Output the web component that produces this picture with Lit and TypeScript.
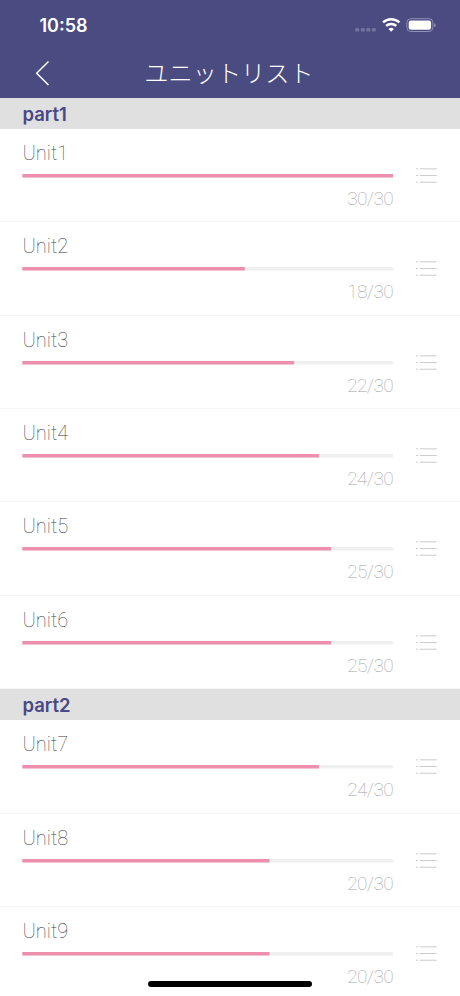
import { LitElement, html, css } from "lit";
import { customElement, property } from "lit/decorators.js";

const TOTAL = 30;
const TRACK = 371;

interface Section {
  title: string;
  units: { name: string; done: number }[];
}

const SECTIONS: Section[] = [
  {
    title: "part1",
    units: [
      { name: "Unit1", done: 30 },
      { name: "Unit2", done: 18 },
      { name: "Unit3", done: 22 },
      { name: "Unit4", done: 24 },
      { name: "Unit5", done: 25 },
      { name: "Unit6", done: 25 },
    ],
  },
  {
    title: "part2",
    units: [
      { name: "Unit7", done: 24 },
      { name: "Unit8", done: 20 },
      { name: "Unit9", done: 20 },
    ],
  },
];

@customElement("unit-row")
export class UnitRow extends LitElement {
  @property() name = "";
  @property({ type: Number }) done = 0;

  static styles = css`
    :host {
      display: flex;
      flex: none;
      box-sizing: border-box;
      height: 93.36px;
      padding: 0 22px;
      border-bottom: 1px solid #f6f6f6;
      font-family: Roboto, "Liberation Sans", sans-serif;
      font-weight: 200;
    }
    .main {
      flex: none;
      width: 371px;
      padding-top: 12px;
    }
    .name {
      height: 33px;
      padding-left: 0.5px;
      line-height: 24px;
      font-size: 20px;
      font-weight: 150;
      color: #3c3c3c;
    }
    .track {
      display: block;
    }
    .count {
      margin-top: 9px;
      line-height: 24px;
      text-align: right;
      font-size: 19px;
      font-weight: 150;
      letter-spacing: -0.6px;
      color: #a4a4a4;
    }
    .menu {
      display: block;
      margin: 38px 0 0 22px;
    }
  `;

  render() {
    return html`
      <div class="main">
        <div class="name">${this.name}</div>
        <svg class="track" width=${TRACK} height="4" viewBox="0 0 371 4">
          <rect x="0.3" width="370.7" height="3.5" fill="#efefef" />
          <rect x="0.3" width=${(this.done / TOTAL) * 370.7} height="3.5" fill="#ee8fae" />
        </svg>
        <div class="count">${this.done}/${TOTAL}</div>
      </div>
      <svg class="menu" width="24" height="18" viewBox="0 0 24 18" fill="none" stroke="#c9c9c9">
        <path d="M1 1.5h2M5 1.5h17.500M1 8.5h2M5 8.5h17.500M1 15.5h2M5 15.5h17.500" />
      </svg>
    `;
  }
}

@customElement("app-root")
export class AppRoot extends LitElement {
  static styles = css`
    :host {
      display: flex;
      flex-direction: column;
      position: relative;
      width: 460px;
      height: 996px;
      overflow: hidden;
      background: #fff;
    }
    .top {
      flex: none;
      height: 98px;
      background: #4a4b80;
      color: #fff;
    }
    .status {
      display: flex;
      align-items: center;
      height: 50px;
      padding: 0 24px 0 39.5px;
    }
    .time {
      flex: 1;
      padding-top: 1px;
      font: 600 18px/24px Inter, "Liberation Sans", sans-serif;
    }
    .nav {
      display: grid;
      grid-template-columns: 50px 1fr 50px;
      align-items: center;
      height: 46px;
      padding: 0 2px 2px 0;
    }
    .back {
      justify-self: end;
    }
    .title {
      padding-bottom: 2px;
      text-align: center;
      font: 300 24.2px/32px "Noto Sans CJK JP", sans-serif;
    }
    .section {
      flex: none;
      height: 31px;
      padding-left: 22.5px;
      background: #e0e0e0;
      color: #4a4887;
      font: 600 18.5px/32px Inter, "Liberation Sans", sans-serif;
    }
    .home {
      position: absolute;
      left: 148px;
      top: 981px;
      width: 164px;
      height: 6px;
      border-radius: 3px;
      background: #000;
    }
  `;

  render() {
    return html`
      <div class="top">
        <div class="status">
          <span class="time">10:58</span>
          <svg width="82" height="18" viewBox="0 0 82 18" fill="none">
            <g fill="#7172a0">
              <rect x="1.2" y="12" width="4" height="3.6" rx="1.2" />
              <rect x="6.8" y="12" width="4" height="3.6" rx="1.2" />
              <rect x="12.3" y="12" width="4" height="3.6" rx="1.2" />
              <rect x="17.8" y="12" width="4" height="3.6" rx="1.2" />
            </g>
            <g stroke="#fff" stroke-width="2.5">
              <path d="M29 6.4a12 12 0 0 1 16.4 0" />
              <path d="M32.1 9.9a7.6 7.6 0 0 1 10.2 0" />
            </g>
            <path d="M37.2 15.8l-2.7-2.8a4 4 0 0 1 5.4 0z" fill="#fff" />
            <rect x="52.9" y="2.7" width="26" height="12.8" rx="4" stroke="#9192b5" />
            <rect x="54.7" y="4.4" width="22.4" height="9.4" rx="2.4" fill="#fff" />
            <path d="M80.2 7v4.4q1.5-.8 1.5-2.2T80.2 7z" fill="#9192b5" />
          </svg>
        </div>
        <div class="nav">
          <svg class="back" width="16" height="26" viewBox="0 0 16 26" fill="none" stroke="#fff" stroke-width="1.5">
            <path d="M14.5 1.5L2.7 13.3L14.5 25" />
          </svg>
          <div class="title">ユニットリスト</div>
        </div>
      </div>
      ${SECTIONS.map(
        (s) => html`
          <div class="section">${s.title}</div>
          ${s.units.map((u) => html`<unit-row .name=${u.name} .done=${u.done}></unit-row>`)}
        `
      )}
      <div class="home"></div>
    `;
  }
}
